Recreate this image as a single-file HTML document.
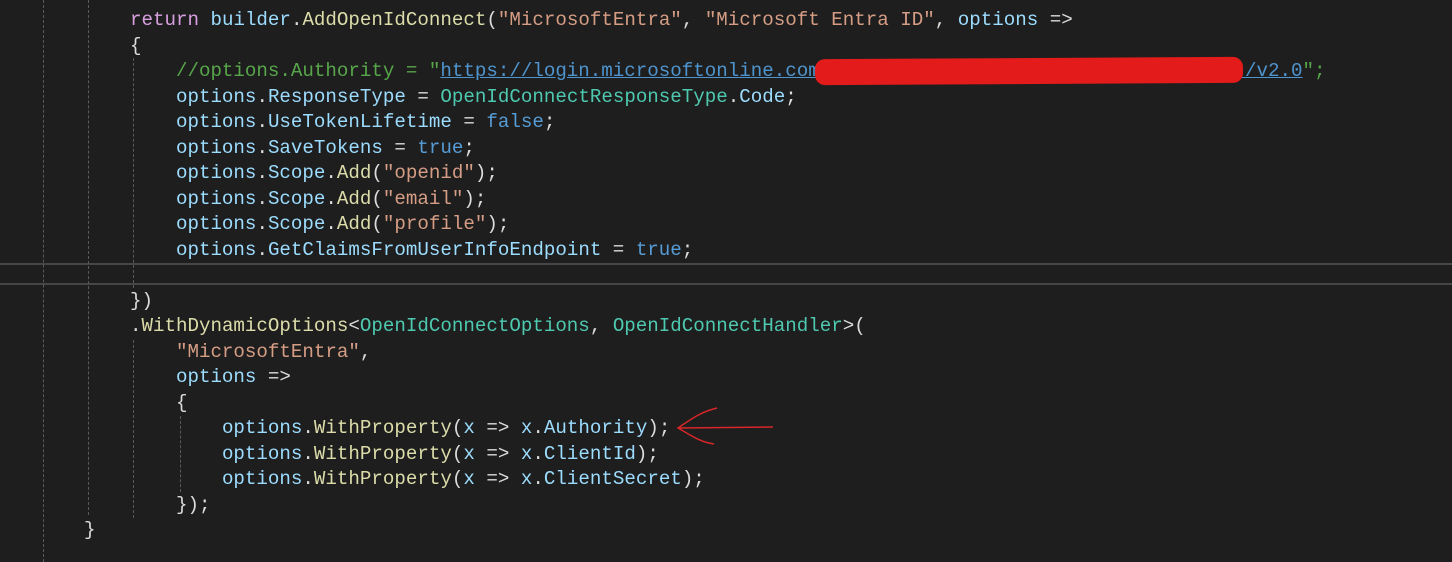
<!DOCTYPE html>
<html><head><meta charset="utf-8"><style>
body{margin:0;background:#1e1e1e;width:1452px;height:562px;overflow:hidden;position:relative}
.c{position:absolute;left:38px;top:8px;font-family:"Liberation Mono",monospace;font-size:19.17px;line-height:25.5px;color:#dcdcdc;white-space:pre}
.k{color:#d8a0df}.v{color:#9cdcfe}.m{color:#dcdcaa}.s{color:#d69d85}.t{color:#4ec9b0}.g{color:#57a64a}.b{color:#569cd6}.u{color:#4e94ce;text-decoration:underline}
.gd{position:absolute;width:0;border-left:1px dashed #5a5a5a}
.hl{position:absolute;left:0;width:1452px;top:263px;height:18px;border-top:2px solid #464646;border-bottom:2px solid #464646}
.red{position:absolute;left:815px;top:58px;width:428px;height:26px;background:#e31b1b;border-radius:10px;transform:rotate(-0.3deg)}
</style></head><body>
<div class="hl"></div>
<div class="gd" style="left:43px;top:0;height:562px"></div>
<div class="gd" style="left:88px;top:0;height:515px"></div>
<div class="gd" style="left:133px;top:58px;height:230px"></div>
<div class="gd" style="left:133px;top:340px;height:178px"></div>
<div class="gd" style="left:180px;top:416px;height:76px"></div>
<div class="c"><span>        </span><span class="k">return</span> <span class="v">builder</span>.<span class="m">AddOpenIdConnect</span>(<span class="s">"MicrosoftEntra"</span>, <span class="s">"Microsoft Entra ID"</span>, <span class="v">options</span> =&gt;
        {
            <span class="g">//options.Authority = "</span><span class="u">https://login.microsoftonline.com                                     /v2.0</span><span class="g">";</span>
            <span class="v">options</span>.<span class="v">ResponseType</span> = <span class="t">OpenIdConnectResponseType</span>.<span class="v">Code</span>;
            <span class="v">options</span>.<span class="v">UseTokenLifetime</span> = <span class="b">false</span>;
            <span class="v">options</span>.<span class="v">SaveTokens</span> = <span class="b">true</span>;
            <span class="v">options</span>.<span class="v">Scope</span>.<span class="m">Add</span>(<span class="s">"openid"</span>);
            <span class="v">options</span>.<span class="v">Scope</span>.<span class="m">Add</span>(<span class="s">"email"</span>);
            <span class="v">options</span>.<span class="v">Scope</span>.<span class="m">Add</span>(<span class="s">"profile"</span>);
            <span class="v">options</span>.<span class="v">GetClaimsFromUserInfoEndpoint</span> = <span class="b">true</span>;

        })
        .<span class="m">WithDynamicOptions</span>&lt;<span class="t">OpenIdConnectOptions</span>, <span class="t">OpenIdConnectHandler</span>&gt;(
            <span class="s">"MicrosoftEntra"</span>,
            <span class="v">options</span> =&gt;
            {
                <span class="v">options</span>.<span class="m">WithProperty</span>(<span class="v">x</span> =&gt; <span class="v">x</span>.<span class="v">Authority</span>);
                <span class="v">options</span>.<span class="m">WithProperty</span>(<span class="v">x</span> =&gt; <span class="v">x</span>.<span class="v">ClientId</span>);
                <span class="v">options</span>.<span class="m">WithProperty</span>(<span class="v">x</span> =&gt; <span class="v">x</span>.<span class="v">ClientSecret</span>);
            });
    }</div>
<div class="red"></div>
<svg style="position:absolute;left:0;top:0" width="1452" height="562"><path d="M717 408 C700 412 690 420 678 428 C692 436 700 442 714 444 M678 428 L773 427" stroke="#d8262a" stroke-width="1.5" fill="none"/></svg>
</body></html>
